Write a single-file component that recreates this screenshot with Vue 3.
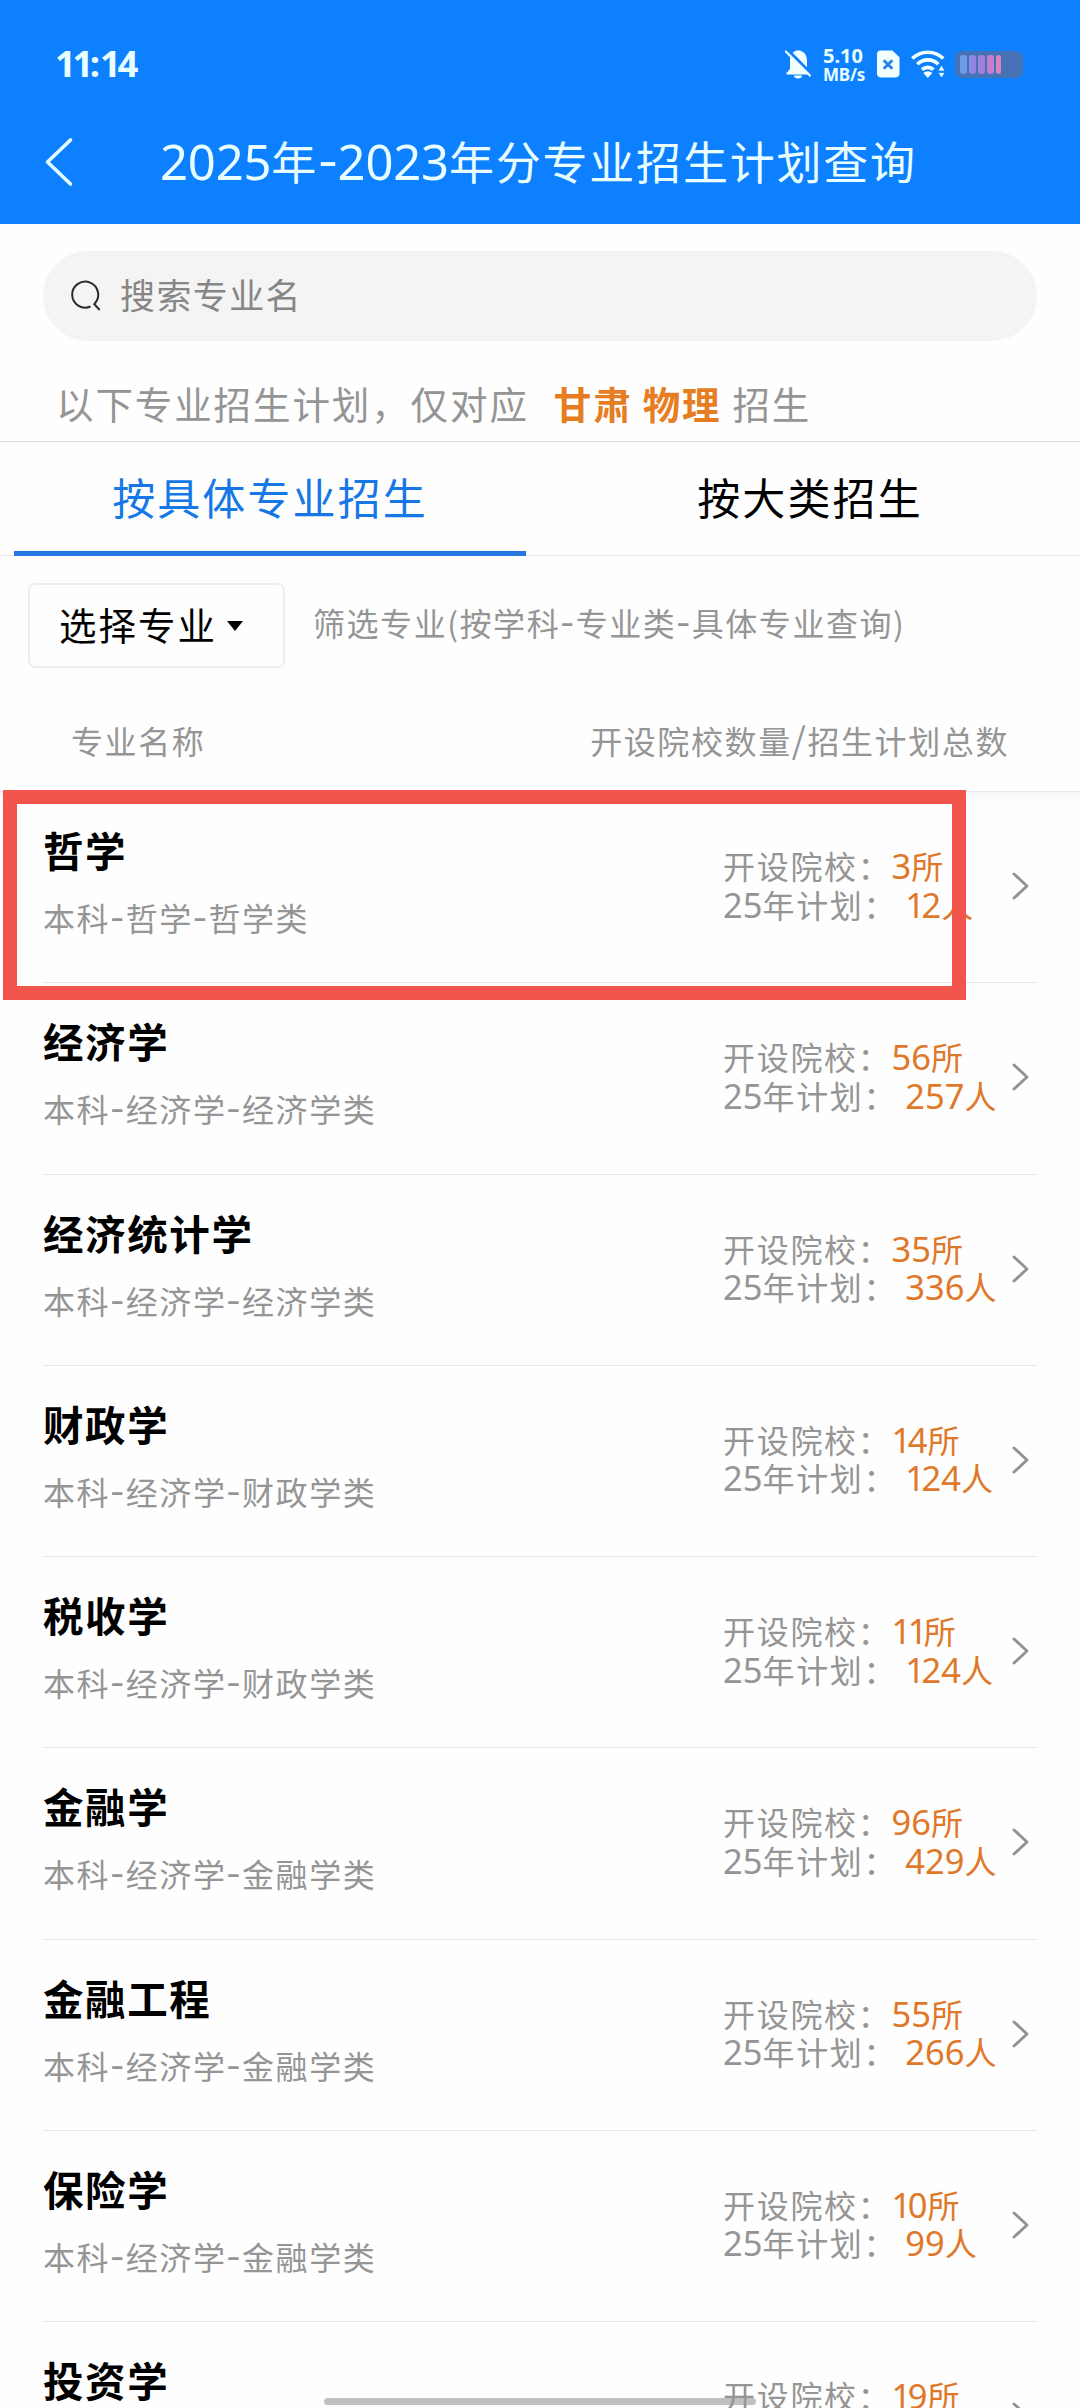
<script setup>
const majors = [
  { name: '哲学', path: '本科-哲学-哲学类', schools: '3', plan: '12' },
  { name: '经济学', path: '本科-经济学-经济学类', schools: '56', plan: '257' },
  { name: '经济统计学', path: '本科-经济学-经济学类', schools: '35', plan: '336' },
  { name: '财政学', path: '本科-经济学-财政学类', schools: '14', plan: '124' },
  { name: '税收学', path: '本科-经济学-财政学类', schools: '11', plan: '124' },
  { name: '金融学', path: '本科-经济学-金融学类', schools: '96', plan: '429' },
  { name: '金融工程', path: '本科-经济学-金融学类', schools: '55', plan: '266' },
  { name: '保险学', path: '本科-经济学-金融学类', schools: '10', plan: '99' },
  { name: '投资学', path: '', schools: '19', plan: '' },
]
const batteryBars = ['#6f9be6', '#8f86e6', '#a37fdc', '#c47fd0', '#dc82bd']
// Splits a label so that hyphens, slashes and digits can be sized separately.
const parts = (s) =>
  s.split(/(\d+|-|\/)/).filter(Boolean).map((t) => ({
    t,
    k: /^\d/.test(t) ? 'num' : t === '-' ? 'dash' : t === '/' ? 'slash' : 'han',
  }))
</script>

<template>
  <div class="screen">
    <header class="header">
      <div class="status">
        <div class="clock"><i class="one">1</i><i class="one">1</i>:<i class="one">1</i>4</div>
        <div class="indicators">
          <svg class="bell" viewBox="0 0 26 30">
            <path d="M5 11.5C5 5.5 8 2 13 1.2c5.500.6 9 4.300 9 10.300v8.500l3 4v1.500H1.500V24L5 20z" fill="#f2ffff" />
            <path d="M9 26.500h8a4 3 0 0 1-8 0z" fill="#f2ffff" />
            <path d="M2.500 .8l24 24" stroke="#0d80ff" stroke-width="3" />
            <path d="M.8 2.500l24 24" stroke="#f2ffff" stroke-width="2.200" stroke-linecap="round" />
          </svg>
          <div class="speed"><span>5.10</span><span class="unit">MB/s</span></div>
          <svg class="sim" viewBox="0 0 24 28">
            <path d="M4 0h12l7.500 7v17a4 4 0 0 1-4 4H4a4 4 0 0 1-4-4V4a4 4 0 0 1 4-4z" fill="#f2ffff" />
            <path d="M7 10l9 9M16 10l-9 9" stroke="#2a83e8" stroke-width="3" />
          </svg>
          <svg class="wifi" viewBox="0 0 34 28">
            <g fill="none" stroke="#f2ffff" stroke-width="3.600">
              <path d="M1.300 8.500a22.500 22.500 0 0 1 31 0" />
              <path d="M6.300 14.200a15 15 0 0 1 21 0" />
              <path d="M11 19.600a8.500 8.500 0 0 1 11.500 0" />
            </g>
            <path d="M12.300 23a6.500 6.500 0 0 1 9 0l-4.500 5z" fill="#f2ffff" />
            <path d="M27 21l3.500-6 3.500 6zM27 22.500l3.500 5.500 3.500-5.500z" fill="#f2ffff" stroke="#0d80ff" stroke-width=".8" />
          </svg>
          <div class="battery">
            <b v-for="c in batteryBars" :key="c" :style="{ background: c }"></b>
            <em></em>
          </div>
        </div>
      </div>
      <div class="navbar">
        <svg class="back" viewBox="0 0 30 52">
          <path d="M26.500 4L3.500 26l23 22" fill="none" stroke="#e4fdff" stroke-width="3.600" stroke-linecap="round" stroke-linejoin="round" />
        </svg>
        <h1><span v-for="(p, i) in parts('2025年-2023年分专业招生计划查询')" :key="i" :class="p.k">{{ p.t }}</span></h1>
      </div>
    </header>

    <div class="search">
      <svg class="lens" viewBox="0 0 32 32">
        <path d="M20.500 26.500A13 13 0 1 1 24.200 24M23.700 23.500l6 6.500" fill="none" stroke="#2b2b2b" stroke-width="2" />
      </svg>
      <span>搜索专业名</span>
    </div>

    <div class="notice">
      <span>以下专业招生计划，仅对应</span><strong>甘肃</strong><strong class="subject">物理</strong><span class="tail">招生</span>
    </div>

    <nav class="tabs">
      <div class="tab active"><span>按具体专业招生</span></div>
      <div class="tab"><span>按大类招生</span></div>
    </nav>

    <div class="filter">
      <div class="picker">
        <span>选择专业</span>
        <svg viewBox="0 0 16 10"><path d="M0 0h16L8 10z" fill="#000" /></svg>
      </div>
      <div class="hint"><span v-for="(p, i) in parts('筛选专业(按学科-专业类-具体专业查询)')" :key="i" :class="p.k">{{ p.t }}</span></div>
    </div>

    <div class="columns">
      <span>专业名称</span>
      <div><span v-for="(p, i) in parts('开设院校数量/招生计划总数')" :key="i" :class="p.k">{{ p.t }}</span></div>
    </div>

    <main class="list">
      <div class="mark"></div>
      <section v-for="m in majors" :key="m.name" class="row">
        <div class="info">
          <h2>{{ m.name }}</h2>
          <p v-if="m.path"><span v-for="(p, i) in parts(m.path)" :key="i" :class="p.k">{{ p.t }}</span></p>
        </div>
        <div class="stats">
          <div>开设院校：<span class="value"><span class="num"><i v-for="(d, i) in m.schools" :key="i" :class="{ one: d === '1' }">{{ d }}</i></span>所</span></div>
          <div v-if="m.plan"><span class="num">25</span>年计划：<span class="value second"><span class="num"><i v-for="(d, i) in m.plan" :key="i" :class="{ one: d === '1' }">{{ d }}</i></span>人</span></div>
        </div>
        <svg class="chevron" viewBox="0 0 18 28">
          <path d="M2 2l13 12L2 26" fill="none" stroke="#929292" stroke-width="2.900" stroke-linecap="round" stroke-linejoin="round" />
        </svg>
      </section>
    </main>
    <div class="home"></div>
  </div>
</template>

<style>
html, body { margin: 0; background: #fefefe; }
</style>

<style scoped>
.screen {
  position: relative;
  width: 1080px;
  height: 2408px;
  overflow: hidden;
  background: #fefefe;
  font-family: "Noto Sans CJK SC", sans-serif;
  color: #959595;
  white-space: nowrap;
}
h1, h2, p { margin: 0; font-weight: 400; }
i { font-style: normal; }
.num { font-family: "Noto Sans", sans-serif; line-height: 0; letter-spacing: 0; }
.num .one { letter-spacing: -3.6px; }
.dash { font-size: 1.25em; line-height: 0; }
.slash { font-size: 1.12em; line-height: 0; }

.header { height: 224px; background: #0d80ff; color: #e9feff; }
.status { display: flex; justify-content: space-between; height: 128px; }
.clock {
  padding: 37px 0 0 55px;
  font: 700 36.500px/52px "Noto Sans", sans-serif;
}
.clock .one { letter-spacing: -3.500px; }
.indicators { display: flex; align-items: center; height: 30px; padding: 49px 57px 0 0; }
.bell { width: 26px; height: 30px; }
.speed {
  display: flex;
  flex-direction: column;
  width: 44px;
  margin: 2px 0 0 12px;
  font: 700 20px/19px "Noto Sans", sans-serif;
}
.speed .unit { font-size: 17px; letter-spacing: -.2px; }
.sim { width: 23px; height: 28px; margin-left: 10px; }
.wifi { width: 34px; height: 28px; margin-left: 11px; }
.battery {
  display: flex;
  align-items: center;
  gap: 2px;
  box-sizing: border-box;
  width: 68px;
  height: 27px;
  margin-left: 10px;
  padding-left: 5px;
  border-radius: 7px;
  background: #4673b5;
}
.battery b { width: 7px; height: 19px; border-radius: 3px; }
.battery b:last-of-type { width: 5px; }
.battery em { width: 12px; height: 16px; margin-left: 2px; border-radius: 3px; background: #496fb6; }
.navbar { display: flex; align-items: center; height: 68px; }
.back { width: 30px; height: 52px; margin-left: 44px; }
h1 { margin: -2px 0 0 86px; font-size: 45px; line-height: 68px; letter-spacing: 1.800px; }
h1 .num { font-size: 49px; letter-spacing: -.2px; }
h1 .dash { font-size: 56px; letter-spacing: 0; }

.search {
  display: flex;
  align-items: center;
  box-sizing: border-box;
  width: 994px;
  height: 90px;
  margin: 27px 0 0 43px;
  padding-left: 27px;
  border-radius: 45px;
  background: #f4f4f4;
  color: #868686;
  font-size: 35px;
  letter-spacing: 1.400px;
}
.lens { width: 32px; height: 32px; margin-right: 18px; }
.search span { line-height: 50px; margin-bottom: 4px; }

.notice {
  display: flex;
  box-sizing: border-box;
  height: 101px;
  padding: 35px 0 0 56px;
  border-bottom: 1px solid #ddd;
  font-size: 37.500px;
  line-height: 54px;
  letter-spacing: 1.900px;
}
.notice strong { margin-left: 25px; color: #e67d22; font-weight: 700; }
.notice .subject { margin-left: 10px; }
.notice .tail { margin-left: 11px; }

.tabs {
  display: flex;
  box-sizing: border-box;
  height: 114px;
  padding: 0 14px;
  border-bottom: 1px solid #ebebeb;
  color: #000;
  font-size: 43px;
  letter-spacing: 2.100px;
}
.tab {
  display: flex;
  justify-content: center;
  box-sizing: border-box;
  width: 512px;
  height: 114px;
  border-bottom: 5px solid transparent;
}
.tab + .tab { margin-left: 28px; }
.tab span { line-height: 109px; }
.tab.active { color: #1678e6; border-color: #2478df; }

.filter { display: flex; align-items: flex-start; height: 141px; padding: 27px 0 0 28px; box-sizing: border-box; }
.picker {
  display: flex;
  align-items: center;
  box-sizing: border-box;
  width: 257px;
  height: 85px;
  padding-left: 29px;
  border: 2px solid #eee;
  border-radius: 7px;
  color: #000;
  font-size: 37.500px;
  letter-spacing: 2px;
}
.picker span { line-height: 50px; margin-bottom: 4px; }
.picker svg { width: 16px; height: 10px; margin-left: 10px; }
.hint { margin-left: 28px; font-size: 32px; line-height: 79px; letter-spacing: 1.550px; }

.columns {
  display: flex;
  justify-content: space-between;
  box-sizing: border-box;
  height: 94px;
  padding: 0 71px 0 71px;
  font-size: 32px;
  line-height: 86px;
  letter-spacing: 1.600px;
}

.list { position: relative; border-top: 1px solid #e9e9ed; box-shadow: inset 0 8px 8px -6px #f1f1f5; }
.mark {
  position: absolute;
  z-index: 2;
  left: 3px;
  top: -2px;
  box-sizing: border-box;
  width: 963px;
  height: 210px;
  border: 14px solid #f0544b;
}
.row {
  display: flex;
  box-sizing: border-box;
  height: 191.250px;
  margin: 0 43px;
  border-bottom: 1px solid #e6e6e6;
}
.info { width: 680px; }
h2 { padding-top: 29px; color: #000; font-size: 40.500px; font-weight: 700; line-height: 58px; letter-spacing: 1.600px; }
.info p { padding-top: 14px; font-size: 32px; line-height: 48px; letter-spacing: 1.600px; }
.stats { width: 291px; padding-top: 54px; font-size: 32px; line-height: 38.500px; letter-spacing: 1.700px; }
.stats .num { font-size: 34.500px; }
.value { color: #e0782a; }
.second { margin-left: 8px; }
.chevron { flex: none; width: 18px; height: 28px; margin-top: 80px; margin-left: -2px; }
.home {
  position: absolute;
  z-index: 3;
  left: 324px;
  top: 2398px;
  width: 432px;
  height: 7px;
  border-radius: 4px;
  background: rgba(150, 150, 150, .6);
}
</style>
